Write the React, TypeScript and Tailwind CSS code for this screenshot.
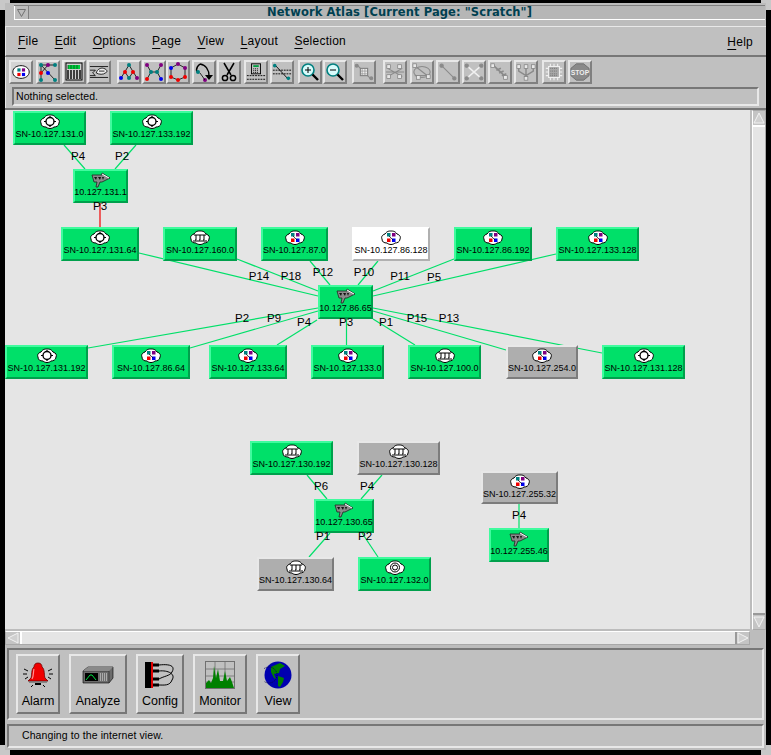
import type { ReactNode } from "react";

const CX = 5;
const CY = 110;

type Kind = "ring" | "bus" | "net" | "target" | "gate";
type Node = { label: string; x: number; y: number; w: number; h?: number; kind: Kind; tone?: "green" | "gray" | "white" };

const nodes: Node[] = [
  { label: "SN-10.127.131.0", x: 13, y: 111, w: 73, kind: "ring" },
  { label: "SN-10.127.133.192", x: 110, y: 111, w: 83, kind: "ring" },
  { label: "10.127.131.1", x: 73, y: 169, w: 55, kind: "gate" },
  { label: "SN-10.127.131.64", x: 61, y: 227, w: 78, kind: "ring" },
  { label: "SN-10.127.160.0", x: 163, y: 227, w: 74, kind: "bus" },
  { label: "SN-10.127.87.0", x: 261, y: 227, w: 67, kind: "net" },
  { label: "SN-10.127.86.128", x: 352, y: 227, w: 78, kind: "net", tone: "white" },
  { label: "SN-10.127.86.192", x: 454, y: 227, w: 78, kind: "net" },
  { label: "SN-10.127.133.128", x: 556, y: 227, w: 83, kind: "net" },
  { label: "10.127.86.65", x: 318, y: 285, w: 55, kind: "gate" },
  { label: "SN-10.127.131.192", x: 5, y: 345, w: 83, kind: "ring" },
  { label: "SN-10.127.86.64", x: 112, y: 345, w: 78, kind: "net" },
  { label: "SN-10.127.133.64", x: 209, y: 345, w: 78, kind: "net" },
  { label: "SN-10.127.133.0", x: 311, y: 345, w: 73, kind: "net" },
  { label: "SN-10.127.100.0", x: 408, y: 345, w: 73, kind: "bus" },
  { label: "SN-10.127.254.0", x: 506, y: 345, w: 72, kind: "net", tone: "gray" },
  { label: "SN-10.127.131.128", x: 602, y: 345, w: 83, kind: "ring" },
  { label: "SN-10.127.130.192", x: 250, y: 441, w: 83, kind: "bus" },
  { label: "SN-10.127.130.128", x: 357, y: 441, w: 83, kind: "bus", tone: "gray" },
  { label: "10.127.130.65", x: 314, y: 499, w: 60, kind: "gate" },
  { label: "SN-10.127.130.64", x: 257, y: 557, w: 77, kind: "bus", tone: "gray" },
  { label: "SN-10.127.132.0", x: 358, y: 557, w: 73, kind: "target" },
  { label: "SN-10.127.255.32", x: 481, y: 471, w: 77, h: 33, kind: "net", tone: "gray" },
  { label: "10.127.255.46", x: 489, y: 528, w: 60, kind: "gate" },
];

const edges: { p: [number, number, number, number]; red?: boolean }[] = [
  { p: [64, 145, 85, 169] },
  { p: [136, 145, 115, 169] },
  { p: [100, 203, 100, 227], red: true },
  { p: [139, 253, 318, 296] },
  { p: [237, 259, 318, 291] },
  { p: [310, 261, 330, 285] },
  { p: [378, 261, 358, 285] },
  { p: [454, 259, 373, 291] },
  { p: [556, 254, 373, 296] },
  { p: [88, 348, 318, 308] },
  { p: [190, 348, 318, 311] },
  { p: [277, 345, 317, 320] },
  { p: [346.5, 319, 346.5, 345] },
  { p: [415, 345, 373, 319] },
  { p: [506, 350, 373, 311] },
  { p: [602, 353, 373, 308] },
  { p: [307, 475, 327, 499] },
  { p: [382, 475, 361, 499] },
  { p: [330, 533, 309, 557] },
  { p: [362, 533, 378, 557] },
  { p: [519, 504, 519, 528] },
];

const ports: [string, number, number][] = [
  ["P4", 78, 157], ["P2", 122, 157], ["P3", 100, 207],
  ["P14", 259, 277], ["P18", 291, 277], ["P12", 323, 273], ["P10", 364, 273], ["P11", 400, 277], ["P5", 434, 278],
  ["P2", 242, 319], ["P9", 274, 319], ["P4", 304, 323], ["P3", 346, 323], ["P1", 386, 323], ["P15", 417, 319], ["P13", 449, 319],
  ["P6", 321, 487], ["P4", 367, 487], ["P1", 323, 537], ["P2", 365, 537], ["P4", 519, 516],
];

const CLOUD = "M4 4 C6 1 8 1 10 1 C12 1 14 1 16 4 C19 5 20 7 19 9 C19 12 16 13 14 13 C12 15 8 15 6 13 C3 13 1 12 1 9 C0 7 1 5 4 4Z";

function NodeIcon({ kind }: { kind: Kind }) {
  if (kind === "gate") {
    return (
      <svg width="20" height="16" viewBox="0 0 20 16" className="block">
        <path d="M1 3 L11 3 L11 1 L19 6 L11 10 L9 10 L7 15 L5 15 L6 10 L3 10Z" fill="#8a8a8a" stroke="#222" strokeWidth="0.8" />
        <path d="M3 5 h3 l-1 3z M7 5 h3 l-1 3z M11 5 h2 l-1 3z" fill="#111" />
        <path d="M11 2 L18 6" stroke="#fff" strokeWidth="1" />
      </svg>
    );
  }
  return (
    <svg width="20" height="16" viewBox="0 0 20 16" className="block">
      <path d={CLOUD} fill="#fff" stroke="#000" strokeWidth="1" />
      {kind === "ring" && (
        <g fill="none" stroke="#000">
          <circle cx="10" cy="7.5" r="4" strokeWidth="1.4" />
          <path d="M10 2v2 M10 11v2 M4 7.5h2 M14 7.5h2" strokeWidth="1.2" />
        </g>
      )}
      {kind === "bus" && (
        <g fill="none" stroke="#000" strokeWidth="1">
          <path d="M4 5h12 M6 5v5h-1 M10 5v5h-1 M14 5v5h-1 M3 11h14" />
        </g>
      )}
      {kind === "net" && (
        <g>
          <rect x="6" y="3" width="3.5" height="3.5" fill="#008080" />
          <rect x="11" y="3" width="3.5" height="3.5" fill="#800080" />
          <rect x="6" y="8.5" width="3.5" height="3.5" fill="#f00000" />
          <rect x="11" y="8.5" width="3.5" height="3.5" fill="#0000f0" />
          <path d="M8 6 L12 10" stroke="#000" strokeWidth="0.7" />
        </g>
      )}
      {kind === "target" && (
        <g fill="none" stroke="#000" strokeWidth="1">
          <circle cx="10" cy="7.5" r="4.5" />
          <circle cx="10" cy="7.5" r="2.5" />
        </g>
      )}
    </svg>
  );
}

function NetNode({ n }: { n: Node }) {
  const tone =
    n.tone === "gray"
      ? "bg-[#aeaeae] border-t-[#e8e8e8] border-l-[#e8e8e8] border-b-[#7c7c7c] border-r-[#7c7c7c]"
      : n.tone === "white"
        ? "bg-white border-t-white border-l-white border-b-[#b0b0b0] border-r-[#b0b0b0]"
        : "bg-[#00e069] border-t-[#40fb9e] border-l-[#40fb9e] border-b-[#00a04c] border-r-[#00a04c]";
  return (
    <div
      className={`absolute flex flex-col items-center border-2 pt-[1px] ${tone}`}
      style={{ left: n.x - CX, top: n.y - CY, width: n.w, height: n.h ?? 34 }}
    >
      <NodeIcon kind={n.kind} />
      <span className="mt-[-1px] whitespace-nowrap font-['Liberation_Sans',sans-serif] text-[9px] leading-[11px] text-black">
        {n.label}
      </span>
    </div>
  );
}

function Canvas() {
  return (
    <div className="relative h-[520px] w-[745px] overflow-hidden bg-[#e5e5e5]">
      <svg width="745" height="520" className="absolute left-0 top-0">
        {edges.map((e, i) => (
          <line
            key={i}
            x1={e.p[0] - CX}
            y1={e.p[1] - CY}
            x2={e.p[2] - CX}
            y2={e.p[3] - CY}
            stroke={e.red ? "#f00000" : "#00e069"}
            strokeWidth="1.2"
          />
        ))}
      </svg>
      {nodes.map((n) => (
        <NetNode key={n.label} n={n} />
      ))}
      {ports.map(([t, x, y], i) => (
        <span
          key={i}
          className="absolute -translate-x-1/2 -translate-y-1/2 font-['Liberation_Sans',sans-serif] text-[11.5px] leading-none text-black"
          style={{ left: x - CX, top: y - CY }}
        >
          {t}
        </span>
      ))}
    </div>
  );
}

const T = "#008080";
const R = "#f00000";
const B = "#0000f0";
const P = "#800080";

function Dots({ d, lines }: { d: [number, number, string][]; lines: string }) {
  return (
    <svg width="20" height="20" viewBox="0 0 20 20">
      <path d={lines} stroke="#000" strokeWidth="0.8" fill="none" />
      {d.map(([x, y, c], i) => (
        <circle key={i} cx={x} cy={y} r="2" fill={c} />
      ))}
    </svg>
  );
}

function Ghost({ children }: { children: ReactNode }) {
  return (
    <svg width="22" height="20" viewBox="0 0 22 20" fill="none" stroke="#8a8a8a" strokeWidth="1.2">
      {children}
    </svg>
  );
}

function Glass({ plus }: { plus?: boolean }) {
  return (
    <svg width="20" height="20" viewBox="0 0 20 20">
      <circle cx="8" cy="8" r="6" fill="#d8fbfb" stroke="#008080" strokeWidth="1.6" />
      <path d="M12.5 12.5 L18 18" stroke="#000" strokeWidth="2.4" />
      <path d={plus ? "M5 8h6 M8 5v6" : "M5 8h6"} stroke="#000" strokeWidth="1" />
    </svg>
  );
}

const WG = <rect width="4" height="4" fill="#e8e8e8" stroke="#808080" strokeWidth="0.8" />;

const tools: { cls: string; active?: boolean; icon: ReactNode }[] = [
  {
    cls: "ml-[3px]",
    active: true,
    icon: (
      <svg width="22" height="18" viewBox="0 0 22 18">
        <path d="M2 9 C2 4 7 2 11 2 C16 2 20 5 20 9 C20 13 16 16 11 16 C7 16 2 14 2 9Z" fill="#fff" stroke="#000" />
        <rect x="7" y="5" width="3.5" height="3.5" fill={T} />
        <rect x="12" y="5" width="3.5" height="3.5" fill={P} />
        <rect x="7" y="10" width="3.5" height="3.5" fill={R} />
        <rect x="12" y="10" width="3.5" height="3.5" fill={B} />
      </svg>
    ),
  },
  {
    cls: "ml-[3px]",
    icon: <Dots d={[[3, 3, T], [10, 3, P], [17, 3, T], [3, 11, R], [10, 11, B], [3, 18, T], [17, 18, T]]} lines="M3 3H17 M3 3V18 M3 11L10 3 M3 3L17 18" />,
  },
  {
    cls: "ml-[2px]",
    icon: (
      <svg width="20" height="20" viewBox="0 0 20 20">
        <rect x="2" y="1" width="16" height="17" fill="#d0d0d0" stroke="#000" />
        <rect x="4" y="3" width="12" height="4" fill="#00d040" />
        <path d="M4 8v9 M7 8v9 M10 8v9 M13 8v9 M16 8v9" stroke="#000" strokeWidth="1.4" />
        <path d="M4 3v4 M7 3v4 M10 3v4 M13 3v4" stroke="#004010" strokeWidth="0.7" />
      </svg>
    ),
  },
  {
    cls: "ml-[1px]",
    icon: (
      <svg width="22" height="20" viewBox="0 0 22 20" fill="none" stroke="#000" strokeWidth="0.9">
        <path d="M1 4h20 M1 16h20 M1 8h6l-3 3 3 3H1" />
        <path d="M8 11 C9 7 13 5 16 6 C20 7 21 10 18 11 C16 13 11 13 8 11Z" fill="#eee" />
        <path d="M11 9h6" />
      </svg>
    ),
  },
  {
    cls: "ml-[6px]",
    icon: <Dots d={[[10, 3, T], [6, 10, R], [14, 10, R], [2, 16, B], [10, 16, T], [18, 16, P]]} lines="M10 3L2 16 M10 3L18 16 M6 10L10 16 M14 10L10 16" />,
  },
  {
    cls: "ml-[1px]",
    icon: <Dots d={[[3, 3, P], [17, 3, P], [3, 17, R], [17, 17, B], [7, 10, T], [13, 10, T]]} lines="M3 3L7 10L3 17 M17 3L13 10L17 17 M7 10H13" />,
  },
  {
    cls: "ml-0",
    icon: <Dots d={[[10, 2, P], [17, 6, P], [17, 15, R], [10, 18, R], [3, 15, R], [3, 6, B]]} lines="M10 2L17 6V15L10 18L3 15V6Z" />,
  },
  {
    cls: "ml-[2px]",
    icon: (
      <svg width="20" height="20" viewBox="0 0 20 20" fill="none">
        <path d="M6 2 C1 6 2 11 5 10 M6 2 C12 3 15 8 15 14" stroke="#000" strokeWidth="1.4" />
        <path d="M11 13h8l-4 5z" fill="#000" />
        <circle cx="4" cy="10" r="2" fill={T} />
        <circle cx="11" cy="18" r="2" fill={P} />
        <path d="M6 11L11 18" stroke="#000" strokeWidth="0.8" />
      </svg>
    ),
  },
  {
    cls: "ml-[1px]",
    icon: (
      <svg width="20" height="20" viewBox="0 0 20 20" fill="none" stroke="#000" strokeWidth="1.5">
        <path d="M5 1 L12 13 M15 1 L8 13" />
        <circle cx="6" cy="16" r="2.6" />
        <circle cx="14" cy="16" r="2.6" />
      </svg>
    ),
  },
  {
    cls: "ml-[3px]",
    icon: (
      <svg width="22" height="20" viewBox="0 0 22 20">
        <rect x="6" y="1" width="10" height="11" fill="#c0c0c0" stroke="#000" />
        <rect x="8" y="2.5" width="6" height="2" fill="#00a040" />
        <path d="M8 6.5h6 M8 8.5h6 M8 10.5h6" stroke="#000" strokeWidth="1" strokeDasharray="1 1" />
        <path d="M1 14h20 M1 18h20" stroke="#000" strokeWidth="1" strokeDasharray="2 1" />
      </svg>
    ),
  },
  {
    cls: "ml-[2px]",
    icon: (
      <svg width="22" height="20" viewBox="0 0 22 20">
        <path d="M1 8h20 M1 12h20" stroke="#000" strokeWidth="1" strokeDasharray="2 1" />
        <path d="M3 2L18 18" stroke="#000" strokeWidth="1" />
        <circle cx="3" cy="3" r="2" fill={T} />
        <circle cx="18" cy="17" r="2" fill={T} />
      </svg>
    ),
  },
  { cls: "ml-[4px]", icon: <Glass plus /> },
  { cls: "ml-[1px]", icon: <Glass /> },
  {
    cls: "ml-[5px]",
    icon: (
      <Ghost>
        <path d="M3 2L19 18" />
        <circle cx="3" cy="3" r="1.6" fill="#8a8a8a" />
        <circle cx="19" cy="17" r="1.6" fill="#8a8a8a" />
        <rect x="7" y="6" width="8" height="8" fill="#eee" stroke="#808080" />
        <path d="M9 6v8 M12 6v8 M7 9h8 M7 12h8" strokeWidth="0.7" />
      </Ghost>
    ),
  },
  {
    cls: "ml-[7px]",
    icon: (
      <Ghost>
        <path d="M3 6 L19 15 M19 6 L3 15 M1 10 h20" />
        <g transform="translate(2 2)">{WG}</g>
        <g transform="translate(14 2)">{WG}</g>
        <g transform="translate(2 13)">{WG}</g>
        <g transform="translate(14 13)">{WG}</g>
      </Ghost>
    ),
  },
  {
    cls: "ml-[3px]",
    icon: (
      <Ghost>
        <ellipse cx="11" cy="10" rx="9" ry="6" />
        <path d="M4 4 L18 15 M3 14h14" />
        <g transform="translate(1 1)">{WG}</g>
        <g transform="translate(16 13)">{WG}</g>
        <g transform="translate(5 14)">{WG}</g>
      </Ghost>
    ),
  },
  {
    cls: "ml-[2px]",
    icon: (
      <Ghost>
        <path d="M4 3L18 17" />
        <circle cx="4" cy="3" r="1.8" fill="#8a8a8a" />
        <circle cx="18" cy="17" r="1.8" fill="#8a8a8a" />
      </Ghost>
    ),
  },
  {
    cls: "ml-[2px]",
    icon: (
      <Ghost>
        <path d="M3 3L19 17 M19 3L3 17" stroke="#f0f0f0" strokeWidth="1.6" />
        <circle cx="3" cy="3" r="1.8" fill="#8a8a8a" />
        <circle cx="19" cy="3" r="1.8" fill="#8a8a8a" />
        <circle cx="3" cy="17" r="1.8" fill="#8a8a8a" />
        <circle cx="19" cy="17" r="1.8" fill="#8a8a8a" />
      </Ghost>
    ),
  },
  {
    cls: "ml-[2px]",
    icon: (
      <Ghost>
        <path d="M4 3L17 15 M7 8L12 6 M10 11L15 9 M13 14L18 12" strokeWidth="1.8" />
        <g transform="translate(1 1)">{WG}</g>
        <g transform="translate(15 14)">{WG}</g>
      </Ghost>
    ),
  },
  {
    cls: "ml-[2px]",
    icon: (
      <Ghost>
        <path d="M3 6V9L11 14V17 M11 6V14 M19 6V9L11 14" strokeWidth="1.6" />
        <g transform="translate(1 2)">{WG}</g>
        <g transform="translate(9 2)">{WG}</g>
        <g transform="translate(17 2)">{WG}</g>
        <g transform="translate(9 15)">{WG}</g>
      </Ghost>
    ),
  },
  {
    cls: "ml-[4px]",
    icon: (
      <Ghost>
        <rect x="5" y="4" width="12" height="12" fill="#a8a8a8" stroke="#f0f0f0" />
        <path d="M7 6h8 M7 9h8 M7 12h8 M7 14h8" stroke="#707070" strokeWidth="1" strokeDasharray="1 1" />
        <path d="M2 6h3 M2 10h3 M2 14h3 M17 6h3 M17 10h3 M17 14h3 M7 1v3 M11 1v3 M15 1v3 M7 16v3 M11 16v3 M15 16v3" stroke="#f0f0f0" />
      </Ghost>
    ),
  },
  {
    cls: "ml-[2px]",
    icon: (
      <svg width="22" height="20" viewBox="0 0 22 20">
        <path d="M7 1H15L21 6V14L15 19H7L1 14V6Z" fill="#8a8a8a" stroke="#6e6e6e" />
        <text x="11" y="13" textAnchor="middle" fontSize="7.5" fontWeight="700" fill="#eee" fontFamily="Liberation Sans">STOP</text>
      </svg>
    ),
  },
];

function ToolBtn({ cls, active, icon }: { cls: string; active?: boolean; icon: ReactNode }) {
  return (
    <div
      className={`flex h-[24px] w-[24px] items-center justify-center overflow-hidden border-2 border-t-[#e8e8e8] border-l-[#e8e8e8] border-r-[#808080] border-b-[#808080] ${
        active ? "bg-[#d4d4d4]" : "bg-[#c0c0c0]"
      } ${cls}`}
    >
      {icon}
    </div>
  );
}

function Bell() {
  return (
    <svg width="30" height="28" viewBox="0 0 30 28">
      <path d="M15 2 C18 2 19 4 19 6 C22 8 21 15 22 17 L25 20 H5 L8 17 C9 15 8 8 11 6 C11 4 12 2 15 2Z" fill="#f00000" stroke="#700000" strokeWidth="0.8" />
      <path d="M11 8 C10 11 11 15 9 18" stroke="#ff9090" strokeWidth="1.2" fill="none" />
      <path d="M6 21 H24" stroke="#707070" strokeWidth="1.4" />
      <path d="M12 23h6" stroke="#000" strokeWidth="2" />
      <path d="M1 8l4 2 M0 13h4 M2 18l3-2 M29 8l-4 2 M30 13h-4 M28 18l-3-2 M8 26l2-2 M22 26l-2-2" stroke="#000" strokeWidth="1" />
    </svg>
  );
}

function Analyzer() {
  return (
    <svg width="32" height="18" viewBox="0 0 32 18">
      <path d="M1 5 L6 1 H31 V12 L27 17 H1Z" fill="#6c6c6c" stroke="#000" strokeWidth="0.6" />
      <path d="M1 5 H27 V17" fill="none" stroke="#333" strokeWidth="0.8" />
      <path d="M6 1 L1 5 H27 L31 1Z" fill="#8a8a8a" />
      <rect x="3" y="7" width="13" height="8" fill="#000" />
      <path d="M4 14 L8 9 L10 9 L14 14" stroke="#00e040" strokeWidth="1" fill="none" />
      <path d="M18 8h8 M18 10h8 M18 12h8 M18 14h8" stroke="#e8e8e8" strokeWidth="1" strokeDasharray="1 1" />
    </svg>
  );
}

function Cables() {
  return (
    <svg width="32" height="26" viewBox="0 0 32 26">
      <rect x="1" y="0" width="6" height="26" fill="#000" />
      <rect x="7" y="0" width="2" height="26" fill="#e00000" />
      <path d="M9 3h6 M9 9h6 M9 17h6 M9 23h6" stroke="#000" strokeWidth="3" />
      <path d="M15 3 C24 2 32 3 28 10 C26 14 20 14 15 17 M15 9 C24 8 32 12 28 18 C26 24 20 23 15 23" stroke="#000" strokeWidth="1" fill="none" />
    </svg>
  );
}

function Chart() {
  return (
    <svg width="30" height="28" viewBox="0 0 30 28">
      <rect x="0.5" y="0.5" width="29" height="27" fill="#c0c0c0" stroke="#707070" />
      <path d="M0 8h30 M0 15h30 M0 21h30 M10 0v28 M20 0v28" stroke="#707070" strokeWidth="0.8" />
      <path d="M1 27 V22 L4 19 L6 22 L8 17 L9 5 L11 17 L13 8 L15 20 L18 20 L20 10 L22 20 L25 16 L27 21 L29 27Z" fill="#008000" />
    </svg>
  );
}

function Globe() {
  return (
    <svg width="28" height="28" viewBox="0 0 28 28">
      <circle cx="14" cy="14" r="13.5" fill="#0000b0" />
      <path d="M7 6 L16 2 L21 5 L16 8 L15 12 L10 13 L12 18 L10 17 L7 11Z" fill="#008000" />
      <path d="M14 15 L20 17 L19 21 L16 26 L14 25 L14 19Z" fill="#008000" />
      <circle cx="5" cy="14" r="8" fill="none" stroke="#000050" strokeWidth="1" strokeDasharray="1 1" />
    </svg>
  );
}

const apps = [
  { label: "Alarm", w: "w-[44px]", icon: <Bell /> },
  { label: "Analyze", w: "w-[58px]", icon: <Analyzer /> },
  { label: "Config", w: "w-[48px]", icon: <Cables /> },
  { label: "Monitor", w: "w-[54px]", icon: <Chart /> },
  { label: "View", w: "w-[44px]", icon: <Globe /> },
];

const menus = [
  ["F", "ile"],
  ["E", "dit"],
  ["O", "ptions"],
  ["P", "age"],
  ["V", "iew"],
  ["L", "ayout"],
  ["S", "election"],
];

function MenuItem({ a, b }: { a: string; b: string }) {
  return (
    <span className="text-[12px] leading-none tracking-[0.25px] text-black">
      <span className="underline underline-offset-[3px]">{a}</span>
      {b}
    </span>
  );
}

export default function App() {
  return (
    <div className="relative h-[755px] w-[771px] overflow-hidden bg-black pb-[5px] pl-[5px] pr-[5px] pt-[3px] font-['Liberation_Sans',sans-serif]">
      {/* resize corners */}
      <div className="absolute left-0 top-0 h-[10px] w-[10px] bg-[#c8c8c8]" />
      <div className="absolute right-0 top-0 h-[10px] w-[10px] bg-[#c8c8c8]" />
      <div className="absolute bottom-0 left-0 h-[10px] w-[10px] bg-[#c8c8c8]" />
      <div className="absolute bottom-0 right-0 h-[10px] w-[10px] bg-[#c8c8c8]" />

      <div className="relative flex h-full w-full flex-col bg-[#bcbcbc]">
        {/* title bar */}
        <div className="ml-[9px] mr-[1px] mt-[2px] flex h-[15px] border-b border-t border-b-white border-t-[#808080] bg-[#b6b6b6]">
          <div className="flex w-[15px] items-center justify-center border-l border-r border-l-white border-r-[#808080] bg-[#bcbcbc]">
            <svg width="9" height="8" viewBox="0 0 9 8">
              <path d="M0.5 0.5H8.5L4.5 7.5Z" fill="#bcbcbc" stroke="#707070" />
            </svg>
          </div>
          <div className="flex-1 pl-[5px] text-center font-['DejaVu_Sans',sans-serif] text-[11.5px] font-bold leading-[13px] tracking-[0.1px] text-[#004050]">
            Network Atlas [Current Page: "Scratch"]
          </div>
        </div>

        {/* menu bar */}
        <div className="mt-[6px] flex h-[31px] items-center gap-[16.3px] border-b-2 border-l border-t border-b-[#777777] border-l-[#e8e8e8] border-t-[#e8e8e8] bg-[#c0c0c0] pl-[12px] pr-[13px]">
          {menus.map(([a, b]) => (
            <MenuItem key={a} a={a} b={b} />
          ))}
          <span className="ml-auto">
            <MenuItem a="H" b="elp" />
          </span>
        </div>

        {/* tool row */}
        <div className="flex h-[30px] items-center border-l border-l-[#e8e8e8] bg-[#c0c0c0]">
          {tools.map((t, i) => (
            <ToolBtn key={i} {...t} />
          ))}
        </div>

        {/* selection readout */}
        <div className="border-l border-l-[#e8e8e8] bg-[#c0c0c0] pb-[2px] pl-[6px] pr-[7px]">
          <div className="flex h-[19px] items-center border-2 border-b-[#e8e8e8] border-l-[#777777] border-r-[#e8e8e8] border-t-[#777777] pl-[2px] text-[10.5px] tracking-[0.05px] text-black">
            Nothing selected.
          </div>
        </div>

        {/* map + scrollbars */}
        <div className="flex h-[537px] border-t-2 border-t-[#777777] bg-[#bcbcbc]">
          <div className="flex w-[745px] flex-col">
            <Canvas />
            <div className="mt-[2px] flex h-[14px] border border-[#a8a8a8] border-t-white bg-[#e5e5e5]">
              <div className="flex w-[14px] items-center justify-center bg-[#c4c4c4]">
                <svg width="12" height="12" viewBox="0 0 12 12"><path d="M11 1V11L1 6Z" fill="#d0d0d0" stroke="#f2f2f2" /></svg>
              </div>
              <div className="flex-1 border-l-2 border-r-2 border-l-white border-r-[#999999]" />
              <div className="flex w-[12px] items-center justify-center bg-[#c4c4c4]">
                <svg width="12" height="12" viewBox="0 0 12 12"><path d="M1 1V11L11 6Z" fill="#d0d0d0" stroke="#f2f2f2" /></svg>
              </div>
            </div>
          </div>
          <div className="ml-[2px] flex h-[520px] w-[14px] flex-col border border-[#a8a8a8] border-l-white bg-[#e5e5e5]">
            <div className="flex h-[14px] items-center justify-center bg-[#c4c4c4]">
              <svg width="12" height="12" viewBox="0 0 12 12"><path d="M1 11H11L6 1Z" fill="#d0d0d0" stroke="#f2f2f2" /></svg>
            </div>
            <div className="flex-1 border-b-2 border-t-2 border-b-[#999999] border-t-white" />
            <div className="flex h-[14px] items-center justify-center bg-[#c4c4c4]">
              <svg width="12" height="12" viewBox="0 0 12 12"><path d="M1 1H11L6 11Z" fill="#d0d0d0" stroke="#f2f2f2" /></svg>
            </div>
          </div>
        </div>

        {/* launcher */}
        <div className="ml-[2px] mr-[2px] mt-[3px] flex h-[72px] items-center gap-[9px] border-2 border-b-[#e8e8e8] border-l-[#777777] border-r-[#e8e8e8] border-t-[#777777] bg-[#c0c0c0] pl-[7px]">
          {apps.map((a) => (
            <div
              key={a.label}
              className={`flex h-[60px] flex-col items-center justify-between border-2 border-b-[#777777] border-l-[#e8e8e8] border-r-[#777777] border-t-[#e8e8e8] pb-[4px] pt-[3px] text-[12.5px] leading-[14px] text-black ${a.w}`}
            >
              <div className="flex h-[32px] items-center">{a.icon}</div>
              <span>{a.label}</span>
            </div>
          ))}
        </div>

        {/* message line */}
        <div className="ml-[2px] mr-[2px] mt-[4px] flex h-[24px] items-center border-2 border-b-[#e8e8e8] border-l-[#777777] border-r-[#e8e8e8] border-t-[#777777] bg-[#c0c0c0] pl-[13px] text-[10.5px] tracking-[0.1px] text-black">
          Changing to the internet view.
        </div>
      </div>
    </div>
  );
}
